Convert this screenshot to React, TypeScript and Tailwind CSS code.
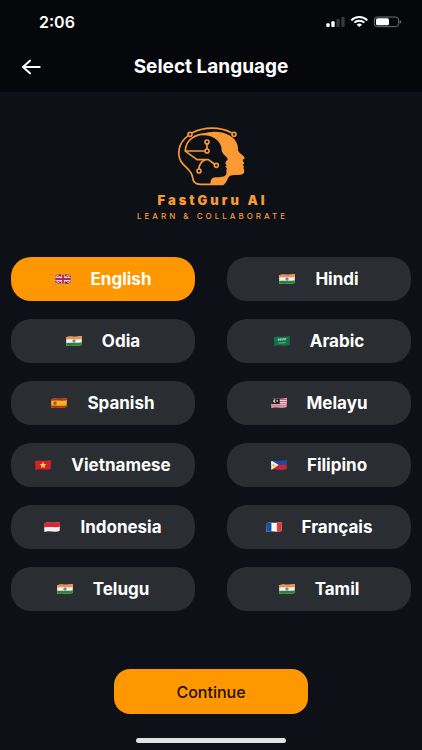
import { useState } from "react";

type Country = "gb" | "in" | "sa" | "es" | "my" | "vn" | "ph" | "id" | "fr";

const languages: { name: string; flag: Country }[] = [
  { name: "English", flag: "gb" },
  { name: "Hindi", flag: "in" },
  { name: "Odia", flag: "in" },
  { name: "Arabic", flag: "sa" },
  { name: "Spanish", flag: "es" },
  { name: "Melayu", flag: "my" },
  { name: "Vietnamese", flag: "vn" },
  { name: "Filipino", flag: "ph" },
  { name: "Indonesia", flag: "id" },
  { name: "Français", flag: "fr" },
  { name: "Telugu", flag: "in" },
  { name: "Tamil", flag: "in" },
];

// Each flag is a gently waving cloth, drawn in a 48 x 32 box.
const cloth = "M2 6 C14 0 26 8 46 2 L45 27 C30 33 16 24 3 30 Z";

function FlagArt({ country }: { country: Country }) {
  switch (country) {
    case "gb":
      return (
        <>
          <rect width="48" height="32" fill="#263a78" />
          <path d="M0 4 L48 28 M48 2 L0 30" stroke="#f3e6e6" strokeWidth="6" />
          <path d="M0 4 L48 28 M48 2 L0 30" stroke="#c8203c" strokeWidth="2.5" />
          <path d="M24 0 V32 M0 16 H48" stroke="#f3e6e6" strokeWidth="9" />
          <path d="M24 0 V32 M0 16 H48" stroke="#c8203c" strokeWidth="5" />
        </>
      );
    case "in":
      return (
        <>
          <rect width="48" height="32" fill="#f4f2ee" />
          <path d="M0 0 H48 V10 C30 14 18 9 0 13 Z" fill="#f0904a" />
          <path d="M0 22 C18 18 30 24 48 19 V32 H0 Z" fill="#24872f" />
          <circle cx="24" cy="16" r="3.5" fill="#8fa0c4" stroke="#405a9a" strokeWidth="1.5" />
        </>
      );
    case "sa":
      return (
        <>
          <rect width="48" height="32" fill="#12734a" />
          <path d="M12 11 L36 9 M13 14 L35 12" stroke="#9cc7b0" strokeWidth="3" strokeDasharray="4 1" />
          <path d="M14 22 L34 20" stroke="#8fbfa6" strokeWidth="2" />
        </>
      );
    case "es":
      return (
        <>
          <rect width="48" height="32" fill="#f4b51c" />
          <path d="M0 0 H48 V8 C30 12 18 7 0 11 Z" fill="#c42a20" />
          <path d="M0 24 C18 20 30 27 48 22 V32 H0 Z" fill="#c42a20" />
          <rect x="9" y="12" width="8" height="9" rx="2" fill="#a9542a" />
        </>
      );
    case "my":
      return (
        <>
          <rect width="48" height="32" fill="#f2d5d5" />
          <path d="M0 6 H48 M0 12 H48 M0 18 H48 M0 24 H48 M0 30 H48" stroke="#d6566a" strokeWidth="3" />
          <rect width="26" height="19" fill="#171d55" />
          <path d="M15 6 A5 5 0 1 0 15 15 A6 6 0 0 1 15 6 Z" fill="#f5d04a" />
          <circle cx="19" cy="10" r="2.5" fill="#f5d04a" />
        </>
      );
    case "vn":
      return (
        <>
          <rect width="48" height="32" fill="#d3202b" />
          <path d="M24 6 L26.5 13 H34 L28 17.5 L30 25 L24 20.5 L18 25 L20 17.5 L14 13 H21.5 Z" fill="#ffda36" />
        </>
      );
    case "ph":
      return (
        <>
          <rect width="48" height="32" fill="#1e49a8" />
          <path d="M0 17 C18 13 30 18 48 14 V32 H0 Z" fill="#cf2231" />
          <path d="M0 2 L23 16 L0 31 Z" fill="#f5f0e6" />
          <circle cx="9" cy="17" r="3.5" fill="#ecc13a" />
        </>
      );
    case "id":
      return (
        <>
          <rect width="48" height="32" fill="#f5f1f0" />
          <path d="M0 0 H48 V15 C30 19 18 13 0 18 Z" fill="#dd2230" />
        </>
      );
    case "fr":
      return (
        <>
          <rect width="48" height="32" fill="#f6f6f6" />
          <rect width="17" height="32" fill="#1f4fa3" />
          <rect x="32" width="16" height="32" fill="#e03a35" />
        </>
      );
  }
}

function Flag({ country, id }: { country: Country; id: string }) {
  return (
    <svg viewBox="2 0 44 32" className="h-3 w-4 shrink-0" aria-hidden="true">
      <clipPath id={id}>
        <path d={cloth} />
      </clipPath>
      <g clipPath={`url(#${id})`}>
        <FlagArt country={country} />
      </g>
    </svg>
  );
}

function StatusBar() {
  return (
    <div className="flex h-11 items-center justify-between pl-[39px] pr-5">
      <span className="text-base leading-5 font-semibold">2:06</span>
      <svg viewBox="0 0 228 36" className="h-3 w-[76px]" aria-hidden="true">
        <rect x="1" y="22" width="10" height="11" rx="3" fill="#fff" />
        <rect x="16" y="16" width="10" height="17" rx="3" fill="#fff" />
        <rect x="31" y="9" width="10" height="24" rx="3" fill="#37383c" />
        <rect x="46" y="2" width="10" height="31" rx="3" fill="#37383c" />
        <g fill="none" stroke="#fff" strokeWidth="6">
          <path d="M76 13 C89 0 111 0 124 13" />
          <path d="M85 20 C93 12 107 12 115 20" />
        </g>
        <path d="M92 26 C97 21 103 21 108 26 L100 33 Z" fill="#fff" />
        <rect x="145" y="3" width="73" height="29" rx="9" fill="none" stroke="#707175" strokeWidth="3" />
        <rect x="150" y="7" width="39" height="21" rx="5" fill="#fff" />
        <path d="M221 13 C227 14 227 22 221 23 Z" fill="#707175" />
      </svg>
    </div>
  );
}

function Logo() {
  return (
    <div className="flex flex-col items-center text-[#f99a35]">
      <svg viewBox="135 21 240 192" className="h-16 w-20" aria-hidden="true">
        <g fill="none" stroke="currentColor" strokeWidth="5" strokeLinecap="round" strokeLinejoin="round">
          <path d="M187 62 C156 84 152 118 166 141 C176 157 198 164 200 188 C201 202 209 208 223 208 H292" />
          <path d="M199 53 C236 35 281 35 316 53" />
          <path d="M178 108 C178 76 208 54 246 58" />
          <path d="M178 108 H236" />
          <path d="M243 87 V101" />
          <path d="M179 109 L213 134 H247 L265 147" />
          <path d="M236 135 C225 141 219 149 219 161" />
          <circle cx="192" cy="58" r="6" />
          <circle cx="324" cy="58" r="6" />
          <circle cx="243" cy="81" r="6" />
          <circle cx="243" cy="108" r="6" />
          <circle cx="271" cy="151" r="6" />
          <circle cx="219" cy="168" r="6" />
        </g>
        <path
          fill="currentColor"
          d="M228 57 C256 47 286 48 307 59 C328 70 337 87 336 104 C336 113 354 121 356 129 C356 133 350 132 350 136 L355 145 L350 149 L354 154 C350 160 357 166 354 173 C349 183 327 177 313 182 C302 186 305 209 286 210 H253 C253 198 256 187 268 187 C280 186 298 187 301 177 C303 171 299 166 303 160 L298 155 L302 150 L298 145 C298 137 308 137 304 130 C299 123 288 116 287 106 C287 80 262 58 228 61 Z"
        />
      </svg>
      <p className="mt-1.5 pl-[3px] text-[13px] leading-4 font-black tracking-[3px]">FastGuru AI</p>
      <p className="pl-[3px] text-[8px] leading-4 font-medium tracking-[3px]">LEARN &amp; COLLABORATE</p>
    </div>
  );
}

export default function App() {
  const [selected, setSelected] = useState("English");

  return (
    <div className="flex min-h-screen flex-col bg-[#0d1017] font-['Inter','Liberation_Sans',sans-serif] text-white">
      <header className="bg-[#06070b] pb-3">
        <StatusBar />
        <div className="grid h-9 grid-cols-[1fr_auto_1fr] items-center pt-2.5">
          <button type="button" aria-label="Back" className="ml-[21px] w-5">
            <svg viewBox="0 0 60 48" className="h-4 w-5" fill="none" stroke="#fff" strokeWidth="6" strokeLinecap="round" strokeLinejoin="round" aria-hidden="true">
              <path d="M56 24 H6 M27 5 L6 24 L27 43" />
            </svg>
          </button>
          <h1 className="text-[19px] leading-6 font-bold">Select Language</h1>
        </div>
      </header>

      <main className="flex grow flex-col items-center px-[11px] pt-[30px]">
        <Logo />

        <div className="mt-[33px] grid w-full grid-cols-2 gap-x-8 gap-y-[18px]">
          {languages.map(({ name, flag }) => (
            <button
              key={name}
              type="button"
              aria-pressed={selected === name}
              onClick={() => setSelected(name)}
              className={`flex h-11 items-center justify-center gap-5 rounded-[20px] text-[17px] leading-6 font-bold ${
                selected === name ? "bg-[#ff9800]" : "bg-[#2a2d31]"
              }`}
            >
              <Flag country={flag} id={`flag-${name.slice(0, 3)}`} />
              <span>{name}</span>
            </button>
          ))}
        </div>

        <button type="button" className="mt-auto h-[45px] w-[46%] min-w-[194px] rounded-2xl bg-[#ff9800] text-base leading-5 font-medium text-[#201000]">
          Continue
        </button>
      </main>

      <footer className="flex justify-center pt-6 pb-[7px]">
        <div className="h-[5px] w-[150px] rounded-full bg-[#e2e2e4]" />
      </footer>
    </div>
  );
}
